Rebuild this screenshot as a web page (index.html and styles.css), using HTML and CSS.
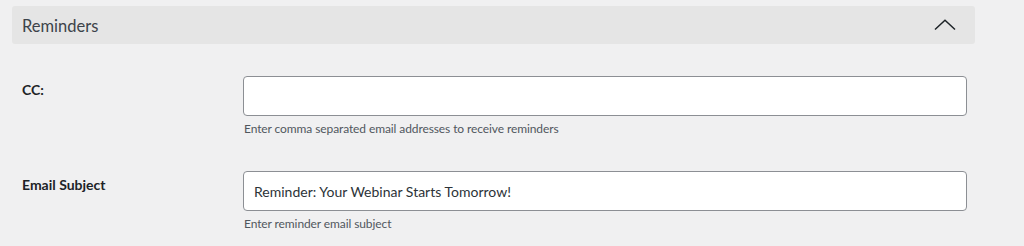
FILE: index.html
```html
<!DOCTYPE html>
<html lang="en">
<head>
<meta charset="utf-8">
<link rel="stylesheet" href="styles.css">
</head>
<body>
<div class="panel">
  <div class="panel-header">
    <h2 class="panel-title">Reminders</h2>
    <svg class="chevron" width="22" height="12" viewBox="0 0 22 12" aria-hidden="true">
      <polyline points="1,10.5 11,1.2 21,10.5" fill="none" stroke="#1d2327" stroke-width="1.5"/>
    </svg>
  </div>
  <div class="panel-body">
    <div class="field">
      <label class="field-label" for="cc">CC:</label>
      <div class="field-control">
        <input id="cc" class="text-input" type="text" value="">
        <p class="help">Enter comma separated email addresses to receive reminders</p>
      </div>
    </div>
    <div class="field">
      <label class="field-label" for="subject">Email Subject</label>
      <div class="field-control">
        <input id="subject" class="text-input" type="text" value="Reminder: Your Webinar Starts Tomorrow!">
        <p class="help">Enter reminder email subject</p>
      </div>
    </div>
  </div>
</div>
</body>
</html>
```
FILE: styles.css
```css
html, body {
  margin: 0;
  padding: 0;
  background: #f0f0f1;
}
body {
  font-family: Lato, "Noto Sans", sans-serif;
  color: #1d2327;
}
.panel {
  padding: 6px 0 0 12px;
  width: 963px;
}
.panel-header {
  display: flex;
  align-items: center;
  justify-content: space-between;
  height: 38px;
  background: #e5e5e5;
  border-radius: 3px;
  padding: 0 19px 0 10px;
}
.panel-title {
  margin: 0;
  font-size: 16.5px;
  font-weight: 400;
  color: #3c434a;
  line-height: 20px;
  position: relative;
  top: 1px;
}
.chevron {
  display: block;
}
.panel-body {
  padding: 32px 0 0 10px;
}
.field {
  display: grid;
  grid-template-columns: 221px 724px;
}
.field + .field {
  margin-top: 34px;
}
.field-label {
  font-size: 14px;
  font-weight: 700;
  line-height: 20px;
  padding-top: 4px;
  color: #1d2327;
}
.field-control {
  display: flex;
  flex-direction: column;
}
.text-input {
  box-sizing: border-box;
  width: 724px;
  height: 40px;
  margin: 0;
  padding: 0 10px;
  border: 1px solid #8c8f94;
  border-radius: 4px;
  background: #fff;
  font-family: Lato, "Noto Sans", sans-serif;
  font-size: 14px;
  color: #2c3338;
  outline: none;
}
.help {
  margin: 5px 0 0 1px;
  font-size: 12px;
  line-height: 16px;
  letter-spacing: -0.1px;
  color: #50575e;
}
```
